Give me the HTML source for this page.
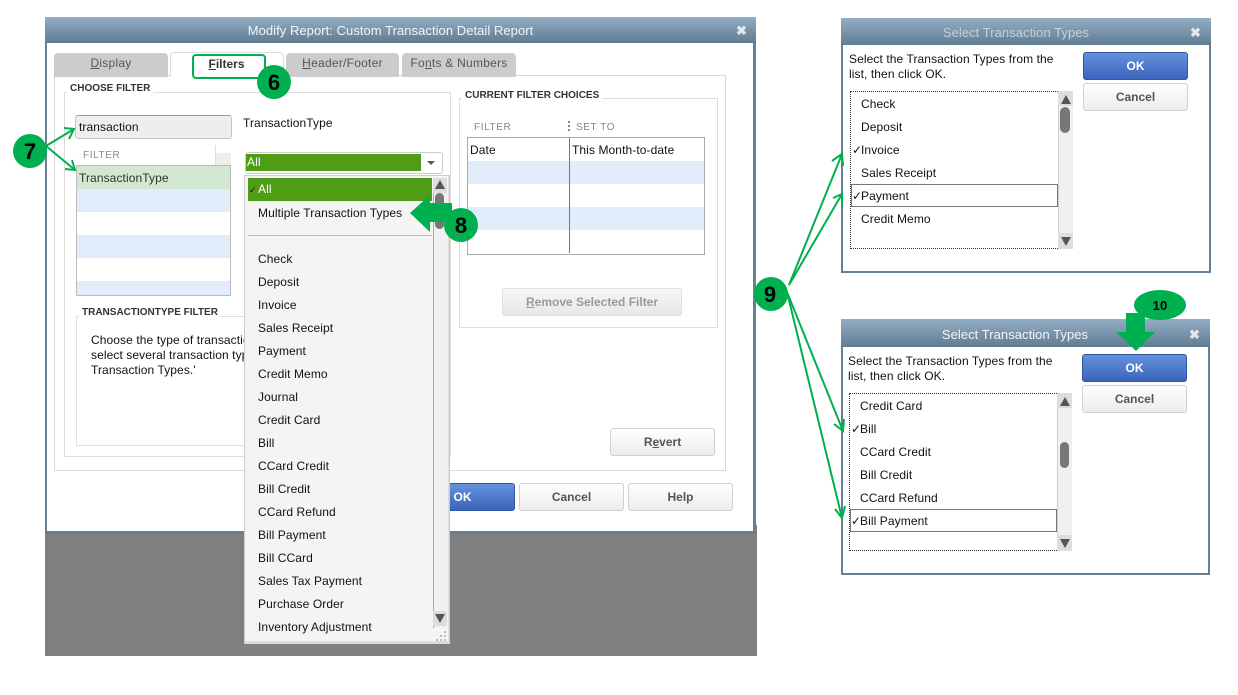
<!DOCTYPE html>
<html><head><meta charset="utf-8"><style>
html,body{margin:0;padding:0;background:#fff;width:1238px;height:695px;overflow:hidden}
body{position:relative;font:12px/16px "Liberation Sans",Arial,sans-serif;color:#111;letter-spacing:.09px}
div,span.a{position:absolute;box-sizing:border-box}
.t{white-space:nowrap;height:16px}
.title{background:linear-gradient(#94aec4,#5f7c93);}
.ttxt{color:#f4f6f8;font-size:13px;letter-spacing:.05px;text-align:center}
.lbl{font-weight:bold;font-size:10px;color:#333;background:#fff;padding:0 3px;height:12px;line-height:12px;white-space:nowrap;letter-spacing:0}
.box{border:1px solid #ddd}
.btn{background:linear-gradient(#fff,#ececec);border:1px solid #d0d0d0;border-radius:3px;text-align:center;font-weight:bold;color:#555;line-height:26px;letter-spacing:0}
.ok{background:linear-gradient(#6392da,#3c64bd);border:1px solid #31589f;border-radius:3px;text-align:center;font-weight:bold;color:#fff;line-height:26px;letter-spacing:0}
.tab{background:#cccccc;border-radius:4px 4px 0 0;text-align:center;color:#555;line-height:21px;height:24px;letter-spacing:.25px}
.hd{color:#888;font-size:10px;letter-spacing:.6px}
.sb{background:#f0f0f0;border-left:1px solid #ccc}
.up{width:0;height:0;border-left:5px solid transparent;border-right:5px solid transparent;border-bottom:9px solid #555}
.dn{width:0;height:0;border-left:5px solid transparent;border-right:5px solid transparent;border-top:9px solid #555}
.th{background:#777;border-radius:5px}
.x{color:#e4e8ec;font-weight:bold;font-size:13px}
</style></head><body>

<!-- grey area behind main dialog -->
<div style="left:45px;top:525px;width:712px;height:131px;background:#808080"></div>

<!-- main dialog -->
<div style="left:45px;top:17px;width:711px;height:517px;background:#fff;border:2px solid #667f95;border-right-width:3px;border-bottom-width:3px"></div>
<div class="title" style="left:45px;top:17px;width:711px;height:26px"></div>
<div class="t ttxt" style="left:45px;top:23px;width:691px">Modify Report: Custom Transaction Detail Report</div>
<div class="t x" style="left:736px;top:23px">✖</div>

<!-- panel -->
<div class="box" style="left:54px;top:75px;width:672px;height:396px;border-color:#d8d8d8"></div>
<div class="tab" style="left:54px;top:53px;width:114px"><u>D</u>isplay</div>
<div style="left:170px;top:52px;width:114px;height:25px;background:#fff;border:1px solid #ddd;border-bottom:0;border-radius:4px 4px 0 0"></div>
<div class="t" style="left:192px;top:54px;width:74px;height:25px;border:2px solid #00b050;border-radius:4px;text-align:center;font-weight:bold;color:#333;line-height:17px;padding-right:5px;letter-spacing:0"><u>F</u>ilters</div>
<div class="tab" style="left:286px;top:53px;width:113px"><u>H</u>eader/Footer</div>
<div class="tab" style="left:402px;top:53px;width:114px">Fo<u>n</u>ts &amp; Numbers</div>

<!-- choose filter -->
<div class="box" style="left:64px;top:92px;width:387px;height:365px"></div>
<div class="lbl" style="left:67px;top:83px">CHOOSE FILTER</div>
<div style="left:75px;top:115px;width:157px;height:24px;background:#eee;border:1px solid #c4c4c4;border-top-color:#999;border-radius:3px"></div>
<div class="t" style="left:79px;top:119px">transaction</div>
<div class="t" style="left:243px;top:115px">TransactionType</div>
<div style="left:76px;top:145px;width:140px;height:20px;background:#fff;border-right:1px solid #ddd"></div>
<div style="left:216px;top:153px;width:15px;height:12px;background:#eee"></div>
<div class="t hd" style="left:83px;top:148px">FILTER</div>
<div style="left:76px;top:165px;width:155px;height:131px;background:#fff;border:1px solid #bbb"></div>
<div style="left:77px;top:166px;width:153px;height:23px;background:#d3e8d0"></div>
<div style="left:77px;top:189px;width:153px;height:23px;background:#e2edfc"></div>
<div style="left:77px;top:235px;width:153px;height:23px;background:#e2edfc"></div>
<div style="left:77px;top:281px;width:153px;height:14px;background:#e2edfc"></div>
<div class="t" style="left:79px;top:170px;color:#333">TransactionType</div>

<div class="box" style="left:76px;top:316px;width:370px;height:130px;border-color:#e0e0e0"></div>
<div class="lbl" style="left:79px;top:307px">TRANSACTIONTYPE FILTER</div>
<div class="t" style="left:91px;top:333px;line-height:15px;height:45px;width:153px;overflow:hidden">Choose the type of transaction<br>select several transaction types<br>Transaction Types.'</div>

<!-- current filter -->
<div class="box" style="left:459px;top:98px;width:259px;height:230px"></div>
<div class="lbl" style="left:462px;top:90px">CURRENT FILTER CHOICES</div>
<div class="t hd" style="left:474px;top:120px">FILTER</div>
<div style="left:568px;top:121px;width:2px;height:12px;background:repeating-linear-gradient(#888 0 2px,#fff 2px 4px)"></div>
<div class="t hd" style="left:576px;top:120px">SET TO</div>
<div style="left:467px;top:137px;width:238px;height:118px;border:1px solid #aaa;background:#fff"></div>
<div style="left:468px;top:161px;width:236px;height:23px;background:#e2edfc"></div>
<div style="left:468px;top:207px;width:236px;height:23px;background:#e2edfc"></div>
<div style="left:569px;top:138px;width:1px;height:115px;background:#777"></div>
<div class="t" style="left:470px;top:142px">Date</div>
<div class="t" style="left:572px;top:142px">This Month-to-date</div>
<div class="btn" style="left:502px;top:288px;width:180px;height:28px;color:#999;background:linear-gradient(#f6f6f6,#e8e8e8);border-color:#e0e0e0"><u>R</u>emove Selected Filter</div>

<div class="btn" style="left:610px;top:428px;width:105px;height:28px">R<u>e</u>vert</div>
<div class="ok" style="left:410px;top:483px;width:105px;height:28px">OK</div>
<div class="btn" style="left:519px;top:483px;width:105px;height:28px">Cancel</div>
<div class="btn" style="left:628px;top:483px;width:105px;height:28px">Help</div>

<!-- combo -->
<div style="left:245px;top:152px;width:198px;height:22px;background:#fff;border:1px solid #ccc;border-radius:3px"></div>
<div class="t" style="left:246px;top:154px;width:175px;height:17px;background:#4f9c17;color:#fff;padding-left:1px;line-height:17px">All</div>
<div style="left:427px;top:161px;width:0;height:0;border-left:4px solid transparent;border-right:4px solid transparent;border-top:4px solid #555"></div>

<!-- dropdown -->
<div style="left:244px;top:175px;width:206px;height:469px;background:#f4f4f4;border:1px solid #ccc;border-bottom:2px solid #ddd;box-shadow:inset -1px -1px 0 #ddd"></div>
<div class="t" style="left:248px;top:178px;width:184px;height:23px;background:#4f9c17;color:#fff;line-height:23px;padding-left:10px">All</div>
<div class="t" style="left:249px;top:183px;font-size:9px;color:#111;line-height:14px">✓</div>
<div class="t" style="left:258px;top:205px">Multiple Transaction Types</div>
<div style="left:248px;top:235px;width:184px;height:1px;background:#bbb"></div>
<div class="t" style="left:258px;top:251px">Check</div>
<div class="t" style="left:258px;top:274px">Deposit</div>
<div class="t" style="left:258px;top:297px">Invoice</div>
<div class="t" style="left:258px;top:320px">Sales Receipt</div>
<div class="t" style="left:258px;top:343px">Payment</div>
<div class="t" style="left:258px;top:366px">Credit Memo</div>
<div class="t" style="left:258px;top:389px">Journal</div>
<div class="t" style="left:258px;top:412px">Credit Card</div>
<div class="t" style="left:258px;top:435px">Bill</div>
<div class="t" style="left:258px;top:458px">CCard Credit</div>
<div class="t" style="left:258px;top:481px">Bill Credit</div>
<div class="t" style="left:258px;top:504px">CCard Refund</div>
<div class="t" style="left:258px;top:527px">Bill Payment</div>
<div class="t" style="left:258px;top:550px">Bill CCard</div>
<div class="t" style="left:258px;top:573px">Sales Tax Payment</div>
<div class="t" style="left:258px;top:596px">Purchase Order</div>
<div class="t" style="left:258px;top:619px">Inventory Adjustment</div>
<div style="left:433px;top:178px;width:14px;height:450px;background:#f0f0f0;border-left:1px solid #aaa"></div>
<div style="left:433px;top:178px;width:14px;height:15px;background:#ddd"></div>
<div style="left:433px;top:611px;width:14px;height:15px;background:#ddd"></div>
<div class="up" style="left:435px;top:180px"></div>
<div class="th" style="left:435px;top:193px;width:9px;height:36px"></div>
<div class="dn" style="left:435px;top:614px"></div>
<svg width="12" height="10" style="position:absolute;left:436px;top:631px"><g fill="#bbb"><rect x="8" y="0" width="2" height="2"/><rect x="4" y="4" width="2" height="2"/><rect x="8" y="4" width="2" height="2"/><rect x="0" y="8" width="2" height="2"/><rect x="4" y="8" width="2" height="2"/><rect x="8" y="8" width="2" height="2"/></g></svg>

<!-- dialog 2 -->
<div style="left:841px;top:18px;width:370px;height:255px;background:#fff;border:2px solid #667f95"></div>
<div class="title" style="left:841px;top:18px;width:370px;height:27px"></div>
<div class="t ttxt" style="left:841px;top:25px;width:350px;color:#c6d2dc">Select Transaction Types</div>
<div class="t x" style="left:1190px;top:25px">✖</div>
<div class="t" style="left:849px;top:52px;line-height:15px;height:30px">Select the Transaction Types from the<br>list, then click OK.</div>
<div class="ok" style="left:1083px;top:52px;width:105px;height:28px">OK</div>
<div class="btn" style="left:1083px;top:83px;width:105px;height:28px">Cancel</div>
<div style="left:850px;top:91px;width:208px;height:158px;border:1px dotted #333;border-right:0"></div>
<div class="sb" style="left:1058px;top:91px;width:15px;height:158px"></div>
<div style="left:1058px;top:91px;width:15px;height:15px;background:#ddd"></div>
<div style="left:1058px;top:233px;width:15px;height:16px;background:#ddd"></div>
<div class="up" style="left:1061px;top:95px"></div>
<div class="th" style="left:1060px;top:107px;width:10px;height:26px"></div>
<div class="dn" style="left:1061px;top:237px"></div>
<div style="left:851px;top:184px;width:207px;height:23px;border:1px solid #777"></div>
<div class="t" style="left:861px;top:96px">Check</div>
<div class="t" style="left:861px;top:119px">Deposit</div>
<div class="t" style="left:852px;top:142px">✓</div>
<div class="t" style="left:861px;top:142px">Invoice</div>
<div class="t" style="left:861px;top:165px">Sales Receipt</div>
<div class="t" style="left:852px;top:188px">✓</div>
<div class="t" style="left:861px;top:188px">Payment</div>
<div class="t" style="left:861px;top:211px">Credit Memo</div>

<!-- dialog 3 -->
<div style="left:841px;top:319px;width:369px;height:256px;background:#fff;border:2px solid #667f95"></div>
<div class="title" style="left:841px;top:319px;width:369px;height:28px"></div>
<div class="t ttxt" style="left:841px;top:327px;width:348px">Select Transaction Types</div>
<div class="t x" style="left:1189px;top:327px">✖</div>
<div class="t" style="left:848px;top:354px;line-height:15px;height:30px">Select the Transaction Types from the<br>list, then click OK.</div>
<div class="ok" style="left:1082px;top:354px;width:105px;height:28px">OK</div>
<div class="btn" style="left:1082px;top:385px;width:105px;height:28px">Cancel</div>
<div style="left:849px;top:393px;width:208px;height:158px;border:1px dotted #333;border-right:0"></div>
<div class="sb" style="left:1057px;top:393px;width:15px;height:158px"></div>
<div style="left:1057px;top:393px;width:15px;height:15px;background:#ddd"></div>
<div style="left:1057px;top:535px;width:15px;height:16px;background:#ddd"></div>
<div class="up" style="left:1060px;top:397px"></div>
<div class="th" style="left:1060px;top:442px;width:9px;height:26px"></div>
<div class="dn" style="left:1060px;top:539px"></div>
<div style="left:850px;top:509px;width:207px;height:23px;border:1px solid #777"></div>
<div class="t" style="left:860px;top:398px">Credit Card</div>
<div class="t" style="left:851px;top:421px">✓</div>
<div class="t" style="left:860px;top:421px">Bill</div>
<div class="t" style="left:860px;top:444px">CCard Credit</div>
<div class="t" style="left:860px;top:467px">Bill Credit</div>
<div class="t" style="left:860px;top:490px">CCard Refund</div>
<div class="t" style="left:851px;top:513px">✓</div>
<div class="t" style="left:860px;top:513px">Bill Payment</div>

<!-- annotations -->
<svg width="1238" height="695" style="position:absolute;left:0;top:0" fill="none">
<g stroke="#00b050" stroke-width="2">
<path d="M46 146L74 129M64 128L74 129L69 139"/>
<path d="M46 146L75 170M65 169L75 170L72 160"/>
<path d="M789 285L842 154M832 161L842 154L843 166"/>
<path d="M789 285L842 194M833 198L842 194L842 206"/>
<path d="M787 292L843 431M834 424L843 431L844 419"/>
<path d="M787 292L842 518M835 509L842 518L845 506"/>
</g>
<ellipse cx="1160" cy="305" rx="26" ry="15" fill="#00b050"/>
<path d="M410 213L430 195V203H452V222H430V232Z" fill="#00b050"/>
<path d="M1126 313H1145V332H1155L1136 351L1116 332H1126Z" fill="#00b050"/>
<circle cx="274" cy="82" r="17" fill="#00b050"/>
<circle cx="30" cy="151" r="17" fill="#00b050"/>
<circle cx="461" cy="225" r="17" fill="#00b050"/>
<circle cx="771" cy="294" r="17" fill="#00b050"/>
<g fill="#000" font-family="Liberation Sans,Arial,sans-serif" font-weight="bold" text-anchor="middle">
<text x="274" y="90" font-size="22">6</text>
<text x="30" y="159" font-size="22">7</text>
<text x="461" y="233" font-size="22">8</text>
<text x="770" y="302" font-size="22">9</text>
<text x="1160" y="310" font-size="13">10</text>
</g>
</svg>
</body></html>
